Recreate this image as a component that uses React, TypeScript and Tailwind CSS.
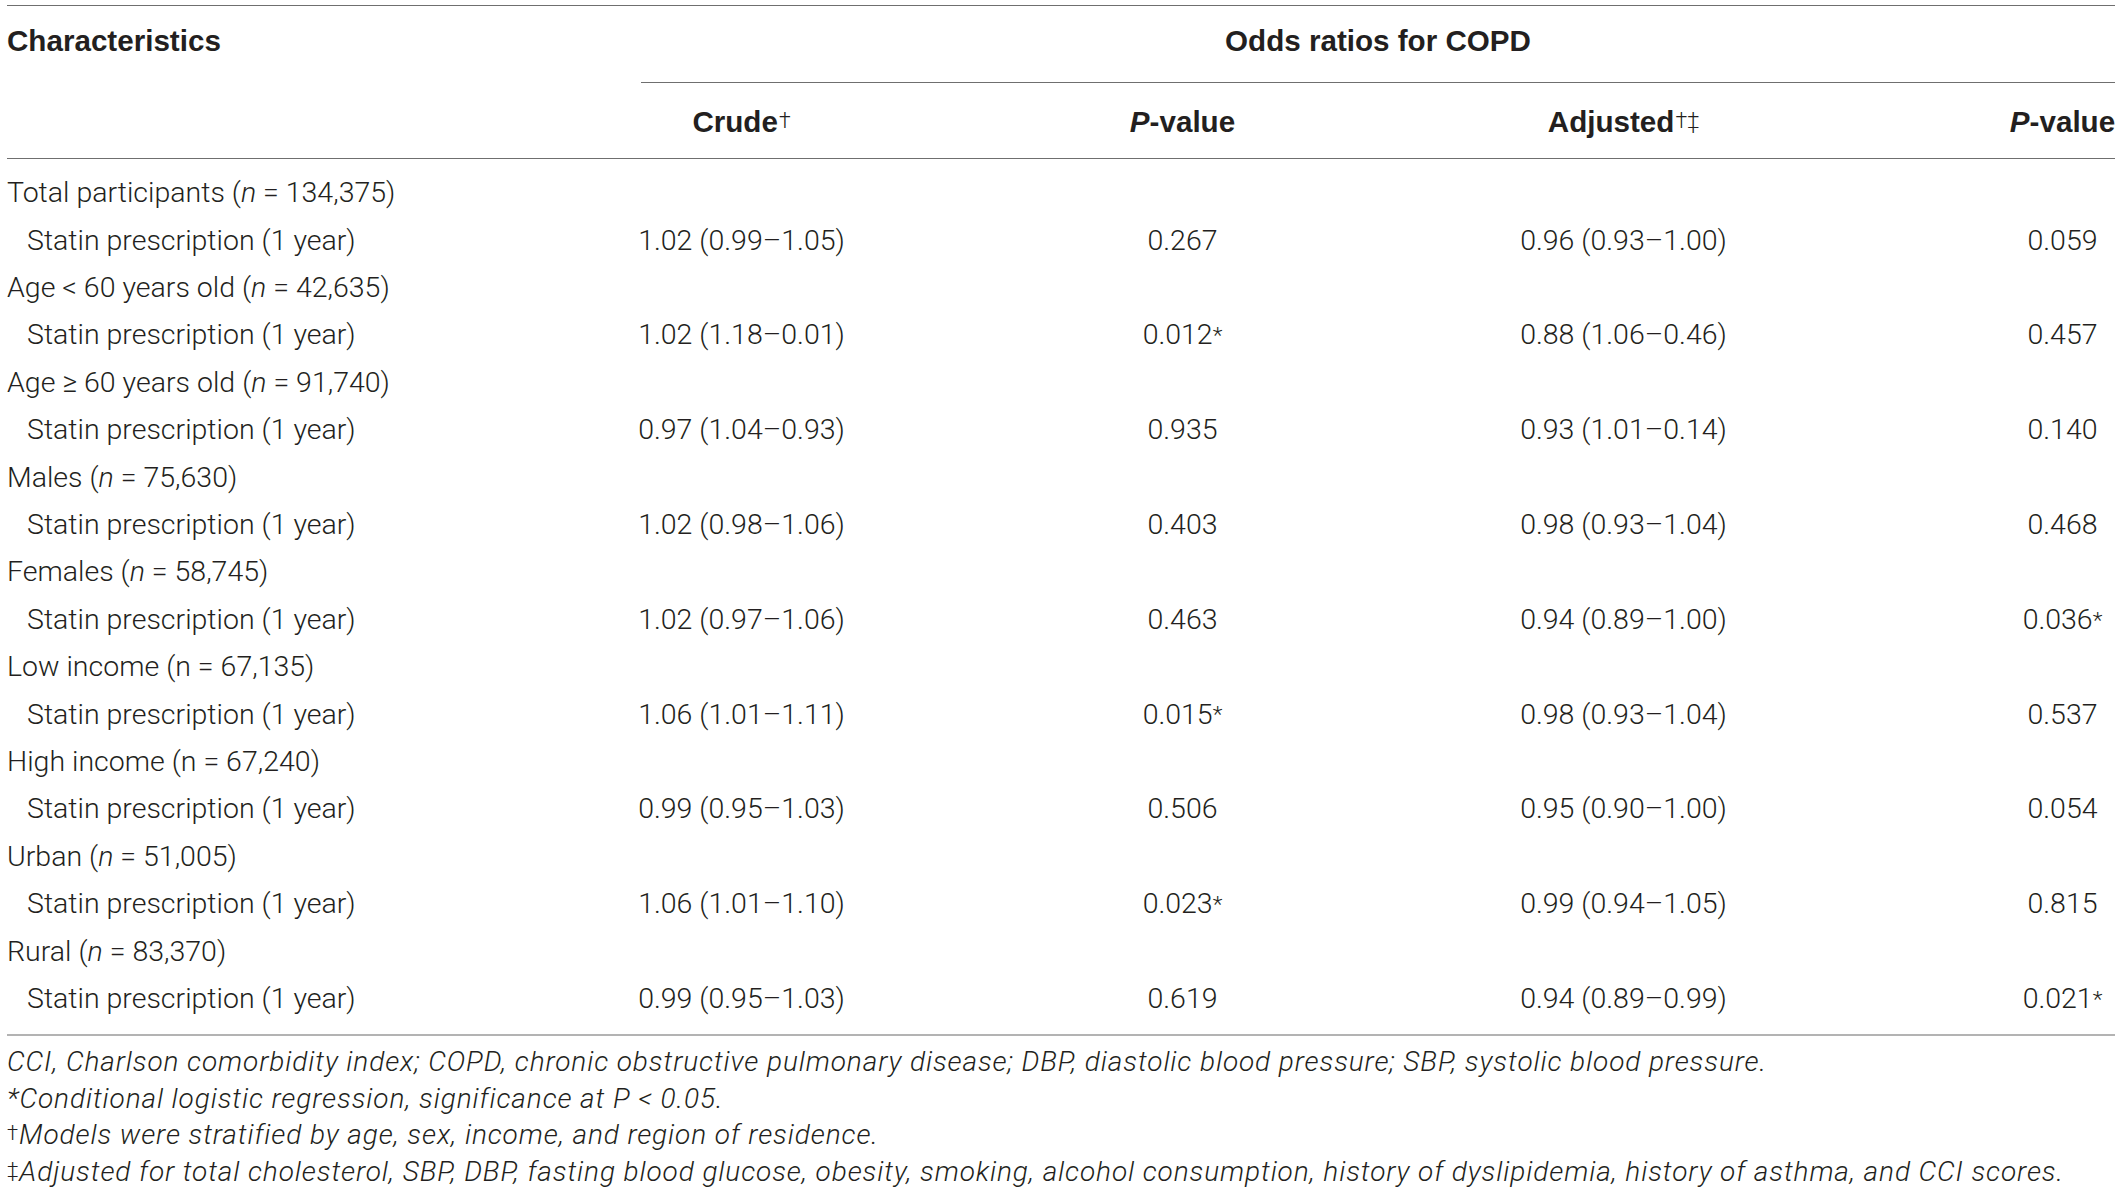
const groups = [
  { label: <>Total participants (<i>n</i> = 134,375)</>, crude: '1.02 (0.99–1.05)', p1: '0.267', adj: '0.96 (0.93–1.00)', p2: '0.059' },
  { label: <>Age &lt; 60 years old (<i>n</i> = 42,635)</>, crude: '1.02 (1.18–0.01)', p1: '0.012*', adj: '0.88 (1.06–0.46)', p2: '0.457' },
  { label: <>Age ≥ 60 years old (<i>n</i> = 91,740)</>, crude: '0.97 (1.04–0.93)', p1: '0.935', adj: '0.93 (1.01–0.14)', p2: '0.140' },
  { label: <>Males (<i>n</i> = 75,630)</>, crude: '1.02 (0.98–1.06)', p1: '0.403', adj: '0.98 (0.93–1.04)', p2: '0.468' },
  { label: <>Females (<i>n</i> = 58,745)</>, crude: '1.02 (0.97–1.06)', p1: '0.463', adj: '0.94 (0.89–1.00)', p2: '0.036*' },
  { label: <>Low income (n = 67,135)</>, crude: '1.06 (1.01–1.11)', p1: '0.015*', adj: '0.98 (0.93–1.04)', p2: '0.537' },
  { label: <>High income (n = 67,240)</>, crude: '0.99 (0.95–1.03)', p1: '0.506', adj: '0.95 (0.90–1.00)', p2: '0.054' },
  { label: <>Urban (<i>n</i> = 51,005)</>, crude: '1.06 (1.01–1.10)', p1: '0.023*', adj: '0.99 (0.94–1.05)', p2: '0.815' },
  { label: <>Rural (<i>n</i> = 83,370)</>, crude: '0.99 (0.95–1.03)', p1: '0.619', adj: '0.94 (0.89–0.99)', p2: '0.021*' },
];

// splits a trailing asterisk off so it can sit raised and small
function Val({ v }: { v: string }) {
  if (v.endsWith('*')) {
    return (
      <span>
        {v.slice(0, -1)}
        <sup className="text-[0.8em] relative -top-[0.05em]">*</sup>
      </span>
    );
  }
  return <span>{v}</span>;
}

const cols = 'grid grid-cols-[514px_441px_441px_441px_271px]';
const head = "font-['Liberation_Sans',Arial,sans-serif] font-bold text-[29.6px] text-[#231f20]";
const dag = "font-['Roboto',sans-serif] font-light text-[0.72em] relative -top-[0.2em] ml-[1px]";

export default function App() {
  return (
    <div className="bg-white min-h-screen w-[2122px] px-[7px] pt-[5px] text-[#231f20] font-['Roboto','Liberation_Sans',sans-serif] font-light">
      <div className="w-[2108px] border-t border-[#6f6f6f]">
        {/* Header */}
        <div className={`${cols} grid-rows-[77px_75px] border-b border-[#6f6f6f]`}>
          <div className={`${head} row-start-1 col-start-1 flex items-center pb-[6px]`}>Characteristics</div>
          <div className="row-start-1 col-start-2 col-span-4 ml-[120px] border-b border-[#6f6f6f] flex items-center justify-center pb-[6px]">
            <span className={head}>Odds ratios for COPD</span>
          </div>
          <div className={`${head} row-start-2 col-start-2 flex items-center justify-center pt-[4px]`}>
            <span>
              Crude<sup className={dag}>†</sup>
            </span>
          </div>
          <div className={`${head} row-start-2 col-start-3 flex items-center justify-center pt-[4px]`}>
            <span><i>P</i>-value</span>
          </div>
          <div className={`${head} row-start-2 col-start-4 flex items-center justify-center pt-[4px]`}>
            <span>
              Adjusted<sup className={dag}>†‡</sup>
            </span>
          </div>
          <div className={`${head} row-start-2 col-start-5 pl-[166px] flex items-center justify-center whitespace-nowrap pt-[4px]`}>
            <span><i>P</i>-value</span>
          </div>
        </div>

        {/* Body */}
        <div className="py-[11px] border-b-2 border-[#b3b3b3] text-[28.5px]">
          {groups.map((g, i) => (
            <div key={i}>
              <div className={`${cols} h-[47.4px] items-center`}>
                <div className="whitespace-nowrap">{g.label}</div>
              </div>
              <div className={`${cols} h-[47.4px] items-center`}>
                <div className="pl-[20px] whitespace-nowrap">Statin prescription (1 year)</div>
                <div className="flex justify-center"><Val v={g.crude} /></div>
                <div className="flex justify-center"><Val v={g.p1} /></div>
                <div className="flex justify-center"><Val v={g.adj} /></div>
                <div className="pl-[166px] flex justify-center whitespace-nowrap"><Val v={g.p2} /></div>
              </div>
            </div>
          ))}
        </div>

        {/* Footnotes */}
        <div className="pt-[8px] italic text-[28px] tracking-[0.9px] leading-[36.6px] whitespace-nowrap">
          <p>CCI, Charlson comorbidity index; COPD, chronic obstructive pulmonary disease; DBP, diastolic blood pressure; SBP, systolic blood pressure.</p>
          <p>*Conditional logistic regression, significance at P &lt; 0.05.</p>
          <p><sup className="text-[0.72em] not-italic relative -top-[0.2em]">†</sup>Models were stratified by age, sex, income, and region of residence.</p>
          <p><sup className="text-[0.72em] not-italic relative -top-[0.2em]">‡</sup>Adjusted for total cholesterol, SBP, DBP, fasting blood glucose, obesity, smoking, alcohol consumption, history of dyslipidemia, history of asthma, and CCI scores.</p>
        </div>
      </div>
    </div>
  );
}
